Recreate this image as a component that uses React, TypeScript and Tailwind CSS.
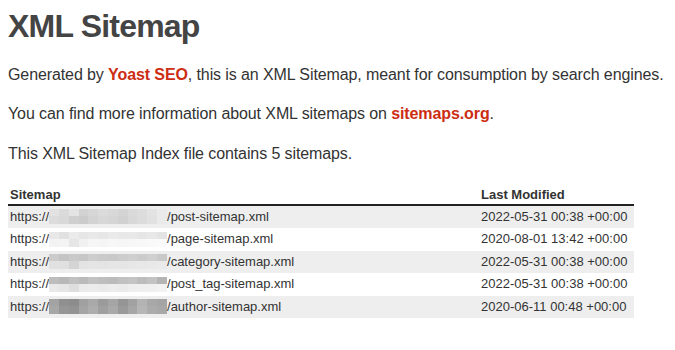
const rows = [
  {
    path: '/post-sitemap.xml',
    date: '2022-05-31 00:38 +00:00',
    top: ['bg-[#e2e2e2]', 'bg-[#dadada]', 'bg-[#e4e4e4]', 'bg-[#d2d2d2]', 'bg-[#d6d6d6]', 'bg-[#dbdbdb]', 'bg-[#d8d8d8]', 'bg-[#d4d4d4]', 'bg-[#dadada]', 'bg-[#dddddd]', 'bg-[#e3e3e3]', 'bg-[#eaeaea]'],
    bottom: ['bg-[#dcdcdc]', 'bg-[#d8d8d8]', 'bg-[#cfcfcf]', 'bg-[#cbcbcb]', 'bg-[#d3d3d3]', 'bg-[#d7d7d7]', 'bg-[#d5d5d5]', 'bg-[#d1d1d1]', 'bg-[#d8d8d8]', 'bg-[#dcdcdc]', 'bg-[#e1e1e1]', 'bg-[#eaeaea]'],
  },
  {
    path: '/page-sitemap.xml',
    date: '2020-08-01 13:42 +00:00',
    top: ['bg-[#e8e8e8]', 'bg-[#e1e1e1]', 'bg-[#ebebeb]', 'bg-[#e6e6e6]', 'bg-[#e9e9e9]', 'bg-[#e7e7e7]', 'bg-[#eaeaea]', 'bg-[#e8e8e8]', 'bg-[#e9e9e9]', 'bg-[#e6e6e6]', 'bg-[#e8e8e8]', 'bg-[#e4e4e4]'],
    bottom: ['bg-[#f3f3f3]', 'bg-[#f4f4f4]', 'bg-[#e6e6e6]', 'bg-[#f1f1f1]', 'bg-[#f6f6f6]', 'bg-[#f5f5f5]', 'bg-[#f7f7f7]', 'bg-[#f6f6f6]', 'bg-[#f7f7f7]', 'bg-[#f8f8f8]', 'bg-[#f9f9f9]', 'bg-[#fafafa]'],
  },
  {
    path: '/category-sitemap.xml',
    date: '2022-05-31 00:38 +00:00',
    top: ['bg-[#cbcbcb]', 'bg-[#c4c4c4]', 'bg-[#c9c9c9]', 'bg-[#c6c6c6]', 'bg-[#cdcdcd]', 'bg-[#cacaca]', 'bg-[#c8c8c8]', 'bg-[#cccccc]', 'bg-[#cfcfcf]', 'bg-[#cbcbcb]', 'bg-[#d0d0d0]', 'bg-[#c9c9c9]'],
    bottom: ['bg-[#e1e1e1]', 'bg-[#e0e0e0]', 'bg-[#d4d4d4]', 'bg-[#e3e3e3]', 'bg-[#e5e5e5]', 'bg-[#e4e4e4]', 'bg-[#e6e6e6]', 'bg-[#e5e5e5]', 'bg-[#e7e7e7]', 'bg-[#e8e8e8]', 'bg-[#e9e9e9]', 'bg-[#eaeaea]'],
  },
  {
    path: '/post_tag-sitemap.xml',
    date: '2022-05-31 00:38 +00:00',
    top: ['bg-[#bdbdbd]', 'bg-[#b8b8b8]', 'bg-[#c0c0c0]', 'bg-[#bababa]', 'bg-[#c2c2c2]', 'bg-[#bebebe]', 'bg-[#bbbbbb]', 'bg-[#c1c1c1]', 'bg-[#c4c4c4]', 'bg-[#bcbcbc]', 'bg-[#c3c3c3]', 'bg-[#b4b4b4]'],
    bottom: ['bg-[#e9e9e9]', 'bg-[#e6e6e6]', 'bg-[#dedede]', 'bg-[#ebebeb]', 'bg-[#ececec]', 'bg-[#eaeaea]', 'bg-[#ededed]', 'bg-[#ebebeb]', 'bg-[#eeeeee]', 'bg-[#efefef]', 'bg-[#f0f0f0]', 'bg-[#f2f2f2]'],
  },
  {
    path: '/author-sitemap.xml',
    date: '2020-06-11 00:48 +00:00',
    top: ['bg-[#a3a3a3]', 'bg-[#909090]', 'bg-[#8c8c8c]', 'bg-[#a0a0a0]', 'bg-[#a9a9a9]', 'bg-[#9b9b9b]', 'bg-[#a5a5a5]', 'bg-[#959595]', 'bg-[#a1a1a1]', 'bg-[#b3b3b3]', 'bg-[#a8a8a8]', 'bg-[#a4a4a4]'],
    bottom: ['bg-[#a7a7a7]', 'bg-[#969696]', 'bg-[#939393]', 'bg-[#a4a4a4]', 'bg-[#adadad]', 'bg-[#a0a0a0]', 'bg-[#a9a9a9]', 'bg-[#9a9a9a]', 'bg-[#a6a6a6]', 'bg-[#b6b6b6]', 'bg-[#acacac]', 'bg-[#a8a8a8]'],
  },
];

// blurred-out domain in the screenshot
function Mosaic({ top, bottom }: { top: string[]; bottom: string[] }) {
  return (
    <span className="flex h-[15px] w-[118px] shrink-0 flex-col">
      <span className="flex h-[7px]">
        {top.map((c, i) => (
          <span key={i} className={`h-full flex-1 ${c}`} />
        ))}
      </span>
      <span className="flex h-[8px]">
        {bottom.map((c, i) => (
          <span key={i} className={`h-full flex-1 ${c}`} />
        ))}
      </span>
    </span>
  );
}

export default function App() {
  return (
    <div className="min-h-[350px] w-[675px] overflow-hidden bg-white px-2 font-['Liberation_Sans',Arial,sans-serif] text-[#333]">
      <h1 className="pt-[10px] text-[32px] font-bold leading-[32px] tracking-[-0.8px] text-[#444]">XML Sitemap</h1>

      <div className="mt-[22.5px] flex flex-col gap-[19.5px] whitespace-nowrap text-[16px] leading-[20px] tracking-[-0.1px]">
        <p>
          Generated by <a className="font-bold text-[#cc2d13]">Yoast SEO</a>, this is an XML Sitemap, meant for
          consumption by search engines.
        </p>
        <p>
          You can find more information about XML sitemaps on{' '}
          <a className="font-bold text-[#cc2d13]">sitemaps.org</a>.
        </p>
        <p>This XML Sitemap Index file contains 5 sitemaps.</p>
      </div>

      <div className="mt-[22px] w-[626px] text-[13px] leading-[16px]">
        <div className="flex h-[20px] items-center border-b-2 border-[#222] font-bold">
          <div className="w-[470px] pl-[2px]">Sitemap</div>
          <div className="pl-[3px]">Last Modified</div>
        </div>
        {rows.map((r, i) => (
          <div key={r.path} className={`flex h-[22.5px] items-center ${i % 2 === 0 ? 'bg-[#eeeeee]' : 'bg-white'}`}>
            <div className="flex w-[470px] items-center pl-[2px]">
              <span>https://</span>
              <Mosaic top={r.top} bottom={r.bottom} />
              <span>{r.path}</span>
            </div>
            <div className="pl-[3px]">{r.date}</div>
          </div>
        ))}
      </div>
    </div>
  );
}
